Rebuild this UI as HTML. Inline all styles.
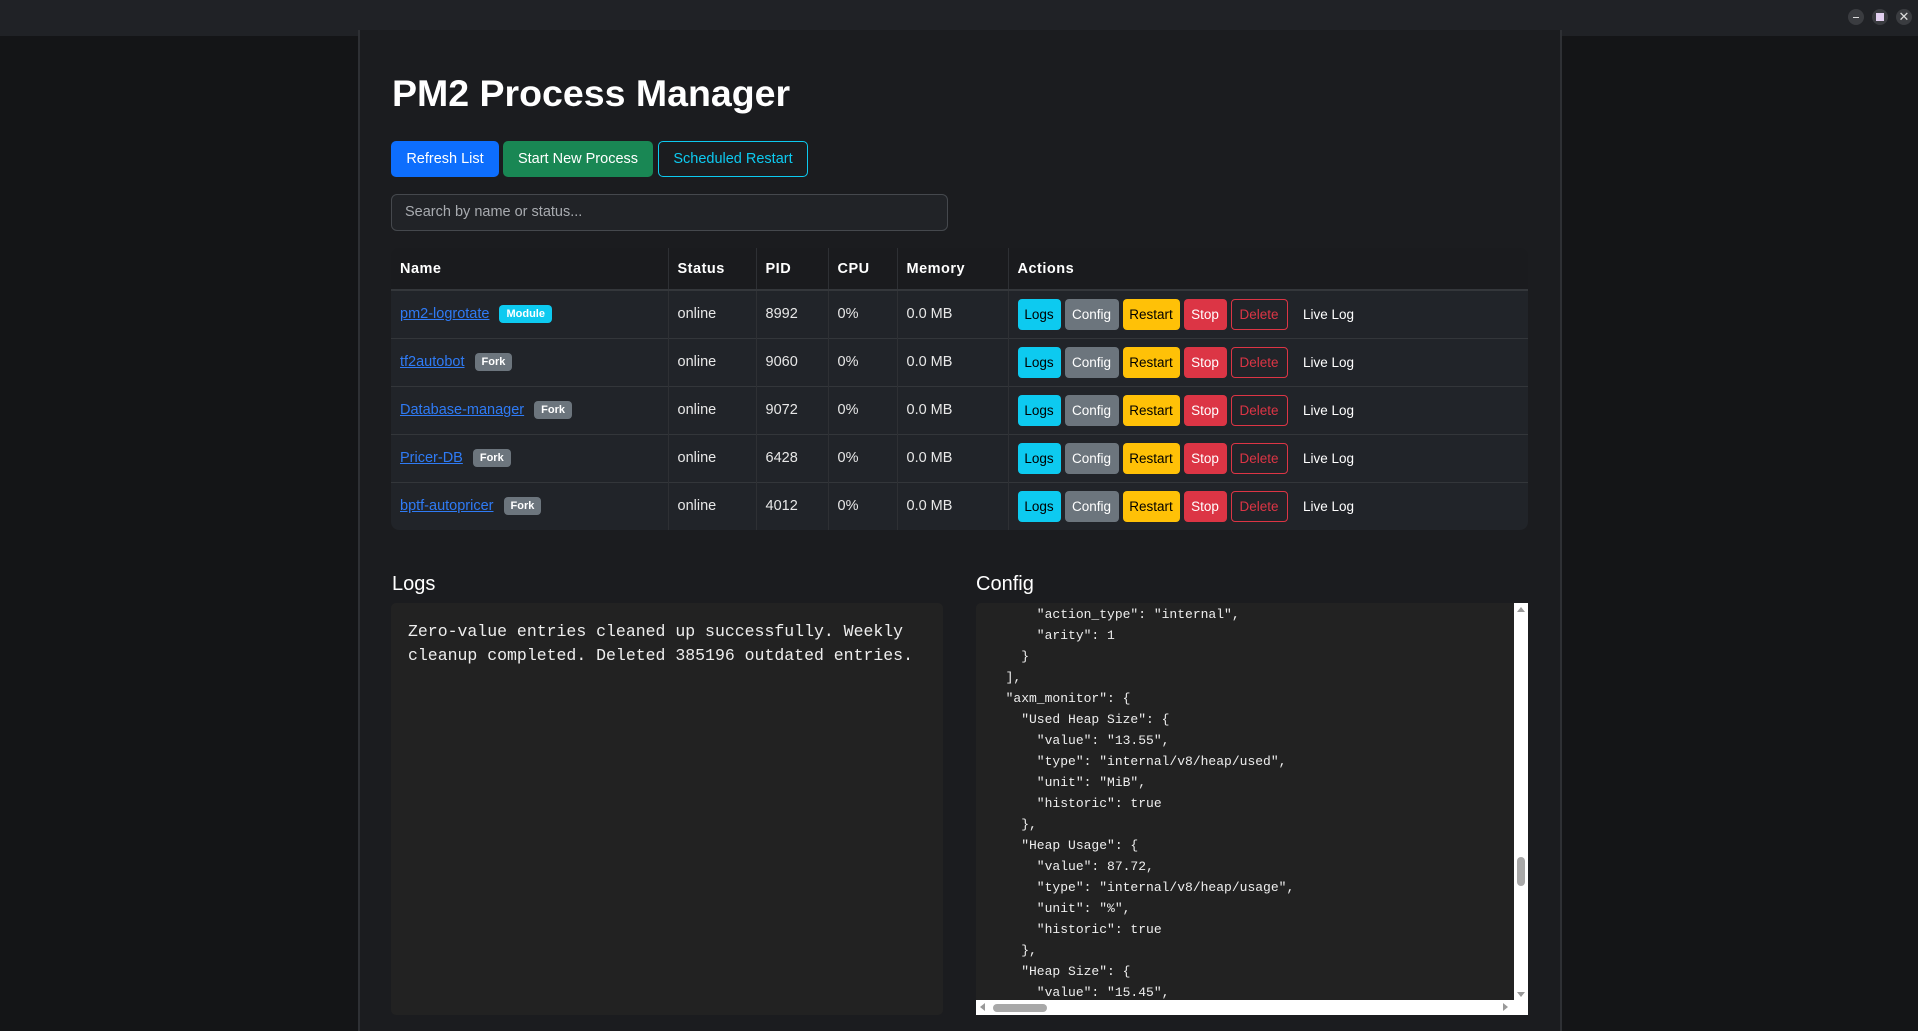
<!DOCTYPE html>
<html><head><meta charset="utf-8"><style>
*{box-sizing:border-box;margin:0;padding:0}
html{width:1918px;height:1031px;overflow:hidden}
body{width:1918px;height:1031px;background:#141517;font-family:"Liberation Sans",sans-serif;color:#fff;position:relative;overflow:hidden}
.top{position:absolute;left:0;top:0;width:1918px;height:36px;background:#202226}
.wb{position:absolute;top:9px;width:16px;height:16px;border-radius:50%;background:#3a3c40}
.main{position:absolute;left:358px;top:30px;width:1204px;height:1001px;background:#1b1c1f;border:2px solid #2e3034;border-top:none;border-bottom:none}
.a{position:absolute}
h1{position:absolute;left:392px;top:72px;font-size:37.5px;font-weight:bold}
.btn{position:absolute;height:36px;border-radius:5px;font-size:14.5px;line-height:36px;text-align:center;color:#fff}
.search{position:absolute;left:391px;top:194px;width:557px;height:37px;border:1px solid #45484d;border-radius:6px;background:#212327;color:#a8abb0;font-size:14.5px;line-height:35px;padding-left:13px}
table{position:absolute;left:391px;top:248px;width:1137px;border-collapse:collapse;border-radius:8px;overflow:hidden;font-size:14.5px}
th{background:#1a1b1e;height:42px;text-align:left;padding-left:9px;font-weight:bold;border-bottom:2px solid #34373b;border-left:1px solid #2e3034;letter-spacing:.5px}
td{background:#212429;height:48px;padding-left:9px;border-top:1px solid #33363a;border-left:1px solid #2e3034;color:#e8e8e8}
th:first-child,td:first-child{border-left:none}
a{color:#2f7bf5;text-decoration:underline}
.bd{display:inline-block;font-size:11px;font-weight:bold;padding:3px 7px;border-radius:4px;margin-left:10px;vertical-align:1px;color:#fff}
.ab{display:inline-block;height:31px;line-height:31px;text-align:center;border-radius:4px;font-size:13.5px;margin-right:4px;vertical-align:middle}
.h2{position:absolute;font-size:20px}
pre{font-family:"Liberation Mono",monospace}
</style></head><body>
<div class="top"></div>
<div class="wb" style="left:1848px"><div style="position:absolute;left:5px;top:7.5px;width:6px;height:1px;background:#ddd"></div></div>
<div class="wb" style="left:1872px"><div style="position:absolute;left:4px;top:4px;width:8px;height:8px;background:#e2d0f0"></div></div>
<div class="wb" style="left:1896px;color:#ddd;font-size:13px;line-height:16px;text-align:center">✕</div>
<div class="main"></div>
<h1>PM2 Process Manager</h1>
<div class="btn" style="left:391px;top:141px;width:108px;background:#0d6efd">Refresh List</div>
<div class="btn" style="left:503px;top:141px;width:150px;background:#198754">Start New Process</div>
<div class="btn" style="left:658px;top:141px;width:150px;border:1px solid #0dcaf0;color:#0dcaf0;line-height:34px">Scheduled Restart</div>
<div class="search">Search by name or status...</div>
<table>
<tr><th style="width:277px">Name</th><th style="width:88px">Status</th><th style="width:72px">PID</th><th style="width:69px">CPU</th><th style="width:111px">Memory</th><th>Actions</th></tr>
<tr><td><a>pm2-logrotate</a><span class="bd" style="background:#0dcaf0">Module</span></td><td>online</td><td>8992</td><td>0%</td><td>0.0 MB</td><td class="act"></td></tr>
<tr><td><a>tf2autobot</a><span class="bd" style="background:#6c757d">Fork</span></td><td>online</td><td>9060</td><td>0%</td><td>0.0 MB</td><td class="act"></td></tr>
<tr><td><a>Database-manager</a><span class="bd" style="background:#6c757d">Fork</span></td><td>online</td><td>9072</td><td>0%</td><td>0.0 MB</td><td class="act"></td></tr>
<tr><td><a>Pricer-DB</a><span class="bd" style="background:#6c757d">Fork</span></td><td>online</td><td>6428</td><td>0%</td><td>0.0 MB</td><td class="act"></td></tr>
<tr><td><a>bptf-autopricer</a><span class="bd" style="background:#6c757d">Fork</span></td><td>online</td><td>4012</td><td>0%</td><td>0.0 MB</td><td class="act"></td></tr>
</table>
<script>
document.querySelectorAll('.act').forEach(function(c){c.innerHTML='<span class="ab" style="width:43px;background:#0dcaf0;color:#000">Logs</span><span class="ab" style="width:54px;background:#6c757d;color:#fff">Config</span><span class="ab" style="width:57px;background:#ffc107;color:#000">Restart</span><span class="ab" style="width:43px;background:#dc3545;color:#fff">Stop</span><span class="ab" style="width:57px;border:1px solid #dc3545;color:#dc3545;line-height:29px">Delete</span><span class="ab" style="width:66px;color:#fff;margin-left:4px">Live Log</span>';});
</script>
<div class="h2" style="left:392px;top:573px">Logs</div>
<div class="h2" style="left:976px;top:573px">Config</div>
<div class="a" style="left:391px;top:603px;width:552px;height:412px;background:#222;border-radius:5px"></div>
<pre class="a" style="left:408px;top:620px;font-size:16.5px;line-height:24px;color:#eee">Zero-value entries cleaned up successfully. Weekly
cleanup completed. Deleted 385196 outdated entries.</pre>
<div class="a" style="left:976px;top:603px;width:552px;height:412px;background:#222;border-radius:5px 0 0 0;overflow:hidden">
<pre style="position:absolute;left:14px;top:1px;font-size:13px;line-height:21px;color:#eee">      "action_type": "internal",
      "arity": 1
    }
  ],
  "axm_monitor": {
    "Used Heap Size": {
      "value": "13.55",
      "type": "internal/v8/heap/used",
      "unit": "MiB",
      "historic": true
    },
    "Heap Usage": {
      "value": 87.72,
      "type": "internal/v8/heap/usage",
      "unit": "%",
      "historic": true
    },
    "Heap Size": {
      "value": "15.45",</pre>
<div style="position:absolute;right:0;top:0;width:14px;height:397px;background:#fff"><div style="position:absolute;left:3px;top:254px;width:8px;height:29px;border-radius:4px;background:#a8a8a8"></div><div style="position:absolute;left:3px;top:4px;border:4px solid transparent;border-bottom:5px solid #999;border-top:none"></div><div style="position:absolute;left:3px;bottom:3px;border:4px solid transparent;border-top:5px solid #999;border-bottom:none"></div></div>
<div style="position:absolute;left:0;bottom:0;width:552px;height:15px;background:#fff"><div style="position:absolute;left:17px;top:4px;width:54px;height:8px;border-radius:4px;background:#a8a8a8"></div><div style="position:absolute;left:4px;top:3px;border:4px solid transparent;border-right:5px solid #999;border-left:none"></div><div style="position:absolute;right:20px;top:3px;border:4px solid transparent;border-left:5px solid #999;border-right:none"></div></div>
</div>
</body></html>
